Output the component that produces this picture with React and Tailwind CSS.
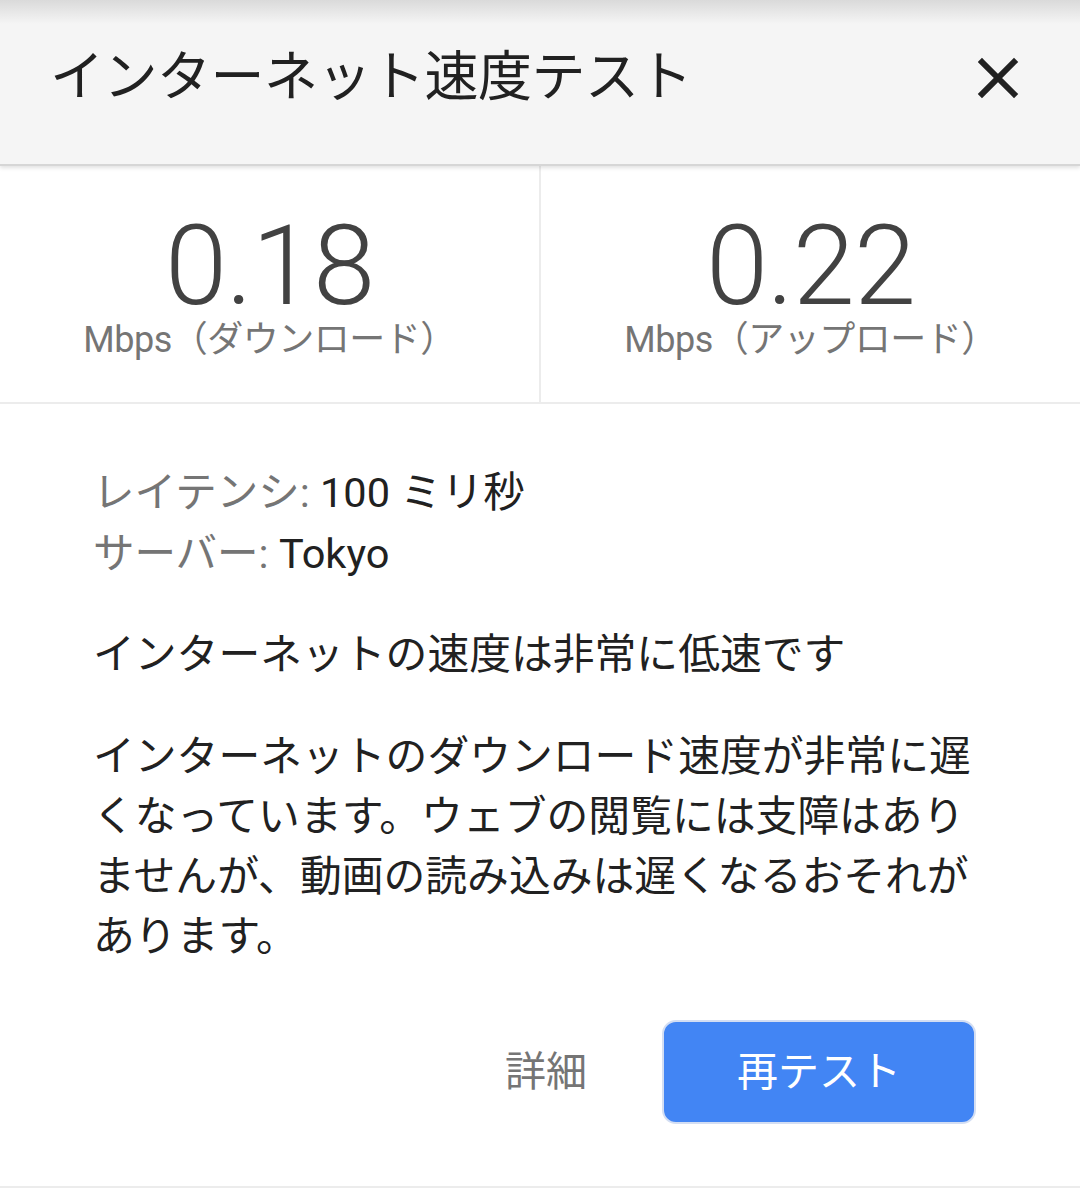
import React from 'react';

const Stat = ({ value, label, border }) => (
    <div className={`flex-1 flex flex-col items-center pt-[56px] ${border ? 'border-r-2 border-[#ececec]' : ''}`}>
        <div className="text-[112px] leading-[88px] font-light text-[#424242] tracking-[-1px]">{value}</div>
        <div className="text-[36px] leading-none text-[#757575] mt-[12px] tracking-[-0.5px]">{label}</div>
    </div>
);

const App = () => {
    return (
        <div
            className="w-[1080px] h-[1188px] bg-white overflow-hidden flex flex-col"
            style={{ fontFamily: 'Roboto, "Noto Sans CJK JP", sans-serif' }}
        >
            {/* header */}
            <div className="relative h-[166px] shrink-0 bg-[#f5f5f5] border-b-2 border-[#d6d6d6] shadow-[0_2px_4px_rgba(0,0,0,0.12)] z-10">
                <div className="absolute top-0 left-0 w-full h-[24px] bg-gradient-to-b from-[#dadada] to-[#f5f5f5]"></div>
                <div className="relative flex items-center justify-between h-full pb-[8px] pl-[50px] pr-[58px]">
                    <h1 className="text-[54px] leading-none font-normal text-[#212121] tracking-[-0.5px]">インターネット速度テスト</h1>
                    <svg width="48" height="48" viewBox="0 0 24 24" className="text-[#212121]">
                        <path d="M4 4 L20 20 M20 4 L4 20" stroke="currentColor" strokeWidth="3" strokeLinecap="square" fill="none" />
                    </svg>
                </div>
            </div>

            {/* speeds */}
            <div className="flex h-[238px] shrink-0 border-b-2 border-[#ececec]">
                <Stat value="0.18" label="Mbps（ダウンロード）" border />
                <Stat value="0.22" label="Mbps（アップロード）" />
            </div>

            {/* body */}
            <div className="flex-1 flex flex-col pl-[93px] pr-[100px] pt-[58px]">
                <div className="text-[41.5px] leading-[61px]">
                    <div><span className="text-[#757575]">レイテンシ:</span> <span className="text-[#212121]">100 ミリ秒</span></div>
                    <div><span className="text-[#757575]">サーバー:</span> <span className="text-[#212121]">Tokyo</span></div>
                </div>
                <p className="text-[41.8px] leading-[60px] text-[#212121] mt-[41px]">インターネットの速度は非常に低速です</p>
                <p className="text-[41.8px] leading-[60px] text-[#212121] mt-[42px]">
                    インターネットのダウンロード速度が非常に遅くなっています。ウェブの閲覧には支障はありませんが、動画の読み込みは遅くなるおそれがあります。
                </p>
                <div className="flex justify-end items-center gap-[75px] mt-[53px] pr-[4px]">
                    <button className="text-[41px] leading-none text-[#757575]">詳細</button>
                    <button className="w-[314px] h-[104px] rounded-[14px] bg-[#4285f4] border-2 border-[#d3def3] text-white text-[41px] leading-none">再テスト</button>
                </div>
            </div>
            <div className="h-[2px] bg-[#ececec] shrink-0"></div>
        </div>
    );
};

export default App;
